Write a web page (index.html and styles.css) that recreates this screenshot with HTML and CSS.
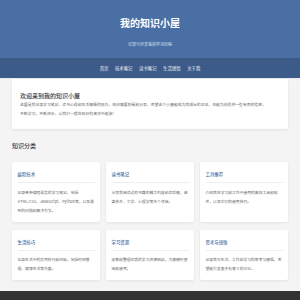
FILE: index.html
```html
<!DOCTYPE html>
<html lang="zh-CN">
<head>
    <meta charset="UTF-8">
    <meta name="viewport" content="width=device-width, initial-scale=1.0">
    <title>我的知识小屋</title>
    <link rel="stylesheet" href="styles.css">
</head>
<body>
    <header class="header">
        <h1 class="site-title">我的知识小屋</h1>
        <p class="site-desc">记录与分享我的学习历程</p>
    </header>
    <nav class="nav">
        <a href="#">首页</a>
        <a href="#">技术笔记</a>
        <a href="#">读书笔记</a>
        <a href="#">生活感悟</a>
        <a href="#">关于我</a>
    </nav>

    <main class="main">
        <section class="welcome">
            <h2>欢迎来到我的知识小屋</h2>
            <p>这里是我记录学习笔记、读书心得和生活感悟的地方。知识需要积累和分享，希望这个小屋能成为我成长的见证，也能为你提供一些有用的信息。</p>
            <p>不断学习，不断进步，让我们一起在知识的海洋中遨游！</p>
        </section>

        <h2 class="section-title">知识分类</h2>
        <div class="grid">
            <div class="card">
                <h3>编程技术</h3>
                <p>记录各种编程语言的学习笔记，包括HTML/CSS、JavaScript、Python等，以及遇到的问题和解决方法。</p>
            </div>
            <div class="card">
                <h3>读书笔记</h3>
                <p>分享我阅读过的书籍的精华内容和读后感，涵盖技术、文学、心理学等多个领域。</p>
            </div>
            <div class="card">
                <h3>工具推荐</h3>
                <p>介绍我在学习和工作中使用的高效工具和软件，以及它们的使用技巧。</p>
            </div>
            <div class="card">
                <h3>生活技巧</h3>
                <p>记录生活中的实用技巧和经验，包括时间管理、健康生活等方面。</p>
            </div>
            <div class="card">
                <h3>学习资源</h3>
                <p>收集和整理优质的学习资源网站，方便随时查阅和使用。</p>
            </div>
            <div class="card">
                <h3>思考与感悟</h3>
                <p>记录我对生活、工作和学习的思考与感悟，希望能引发更多有意义的讨论。</p>
            </div>
        </div>
    </main>

    <footer class="footer">
        <p>© 2024 我的知识小屋 · 保持学习，保持好奇</p>
    </footer>
</body>
</html>
```

FILE: styles.css
```css
body {
    font-family: "Noto Sans CJK SC", "Noto Sans", sans-serif;
    margin: 0;
    padding: 0;
    background-color: #f4f4f4;
    color: #333;
}
.header {
    background-color: #4a6fa5;
    color: #fff;
    text-align: center;
    height: 58px;
    padding-top: 1px;
    box-sizing: border-box;
}
.site-title {
    font-size: 10px;
    line-height: 14px;
    font-weight: bold;
    margin: 15px 0 0;
}
.site-desc {
    font-size: 4px;
    line-height: 6px;
    color: #dce4ef;
    margin: 11px 0 0;
}
.nav {
    background-color: #3d5b89;
    height: 20px;
    display: flex;
    justify-content: center;
    align-items: center;
    gap: 6.5px;
    border-bottom: 1px solid #e6ebf2;
}
.nav a {
    color: #eef2f8;
    font-size: 4.4px;
    text-decoration: none;
}
.main {
    margin: 0 12px;
}
.welcome {
    background-color: #fff;
    padding: 13px 8px 11px;
    border-radius: 0 0 2px 2px;
    box-shadow: 0 1px 3px rgba(0, 0, 0, 0.08);
}
.welcome h2 {
    font-size: 6px;
    line-height: 8px;
    font-weight: 500;
    color: #333;
    margin: 0;
}
.welcome p {
    font-size: 3.85px;
    line-height: 9px;
    color: #666;
    margin: 0;
}
.section-title {
    font-size: 6px;
    line-height: 8px;
    font-weight: 500;
    color: #333;
    margin: 13px 0 12px;
}
.grid {
    display: grid;
    grid-template-columns: repeat(3, 1fr);
    column-gap: 6px;
    row-gap: 8px;
    margin-bottom: 11px;
}
.card {
    background-color: #fff;
    padding: 9px 5.5px 7px;
    border-radius: 2px;
    box-shadow: 0 1px 3px rgba(0, 0, 0, 0.08);
}
.card h3 {
    font-size: 4.4px;
    line-height: 6px;
    font-weight: 500;
    color: #4a6fa5;
    margin: 0 0 4.5px;
    padding-bottom: 5px;
    border-bottom: 1px solid #eee;
}
.card p {
    font-size: 3.8px;
    line-height: 9px;
    color: #666;
    margin: 0;
}
.footer {
    background-color: #333;
    color: #ccc;
    text-align: center;
    padding: 16px 0;
    font-size: 4px;
}
.footer p {
    margin: 0;
}
```
